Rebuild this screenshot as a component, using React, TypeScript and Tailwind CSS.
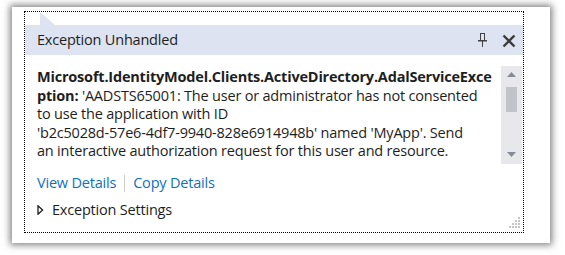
import React from "react";

const font = { fontFamily: '"Open Sans", "Noto Sans", sans-serif' };

export default function App() {
  return (
    <div className="w-[565px] h-[255px] bg-white pt-[7px] pl-[12px] overflow-hidden" style={font}>
      <div className="w-[538px] h-[236px] bg-white shadow-[0_0_7px_2px_rgba(0,0,0,0.5)] pt-[4px] pl-[12px]">
        <div className="relative w-[500px] h-[222px] border border-dotted border-black flex flex-col text-[14.5px] tracking-[-0.2px] leading-[18.5px] text-[#1e1e1e]">
          {/* beak */}
          <div className="h-[13px] pl-[15px]">
            <svg width="16" height="13" viewBox="0 0 16 13" className="block">
              <polygon points="0,0 0,13 15,13" fill="#dde3f0" />
            </svg>
          </div>
          {/* header */}
          <div className="h-[30px] bg-[#dde3f0] flex items-center pl-3 pr-[7px] pt-[1px]">
            <span className="flex-1 text-[#1e1e1e]">Exception Unhandled</span>
            <svg width="9" height="15" viewBox="0 0 9 15" className="mr-[15px]">
              <rect x="2.5" y="0.5" width="4" height="7" fill="none" stroke="#424242" strokeWidth="1" />
              <rect x="0" y="7" width="9" height="1.5" fill="#424242" />
              <rect x="4" y="8" width="1" height="6" fill="#424242" />
            </svg>
            <svg width="14" height="14" viewBox="0 0 14 14">
              <path d="M1.5 1.5 L12.5 12.5 M12.5 1.5 L1.5 12.5" stroke="#3c3c3c" strokeWidth="2.4" />
            </svg>
          </div>
          {/* body */}
          <div className="flex">
            <div className="flex-1 pl-3 pt-[13px] whitespace-nowrap">
              <div className="font-bold">Microsoft.IdentityModel.Clients.ActiveDirectory.AdalServiceExce</div>
              <div>
                <span className="font-bold">ption:</span> 'AADSTS65001: The user or administrator has not consented
              </div>
              <div>to use the application with ID</div>
              <div>'b2c5028d-57e6-4df7-9940-828e6914948b' named 'MyApp'. Send</div>
              <div>an interactive authorization request for this user and resource.</div>
            </div>
            <div className="mt-[11px] mr-[1px] w-[21px] h-[98px] bg-[#e8e8ec] flex flex-col items-center">
              <svg width="9" height="5" viewBox="0 0 9 5" className="mt-[6px]">
                <polygon points="0,5 4.5,0 9,5" fill="#868999" />
              </svg>
              <div className="mt-[10px] w-[11px] h-[25px] bg-[#c2c3c9]" />
              <div className="flex-1" />
              <svg width="9" height="5" viewBox="0 0 9 5" className="mb-[7px]">
                <polygon points="0,0 9,0 4.5,5" fill="#868999" />
              </svg>
            </div>
          </div>
          {/* links */}
          <div className="flex items-center pl-3 mt-[10px]">
            <span className="text-[#0e70c0]">View Details</span>
            <span className="mx-[8px] w-px h-[17px] bg-[#cccccc]" />
            <span className="text-[#0e70c0]">Copy Details</span>
          </div>
          {/* settings */}
          <div className="flex items-center pl-3 mt-[8px]">
            <svg width="7" height="10" viewBox="0 0 7 10" className="mr-[8px]">
              <polygon points="1,0.8 1,9.2 5.6,5" fill="none" stroke="#1e1e1e" strokeWidth="1.3" />
            </svg>
            <span>Exception Settings</span>
          </div>
          {/* grip */}
          <svg width="14" height="14" viewBox="0 0 14 14" className="absolute right-[1px] bottom-[1px]">
            {[
              [10, 0],
              [7, 3], [10, 3],
              [4, 6], [7, 6], [10, 6],
              [1, 9], [4, 9], [7, 9], [10, 9],
            ].map(([x, y], i) => (
              <rect key={i} x={x} y={y} width="2" height="2" fill="#c4c4cc" />
            ))}
          </svg>
        </div>
      </div>
    </div>
  );
}
